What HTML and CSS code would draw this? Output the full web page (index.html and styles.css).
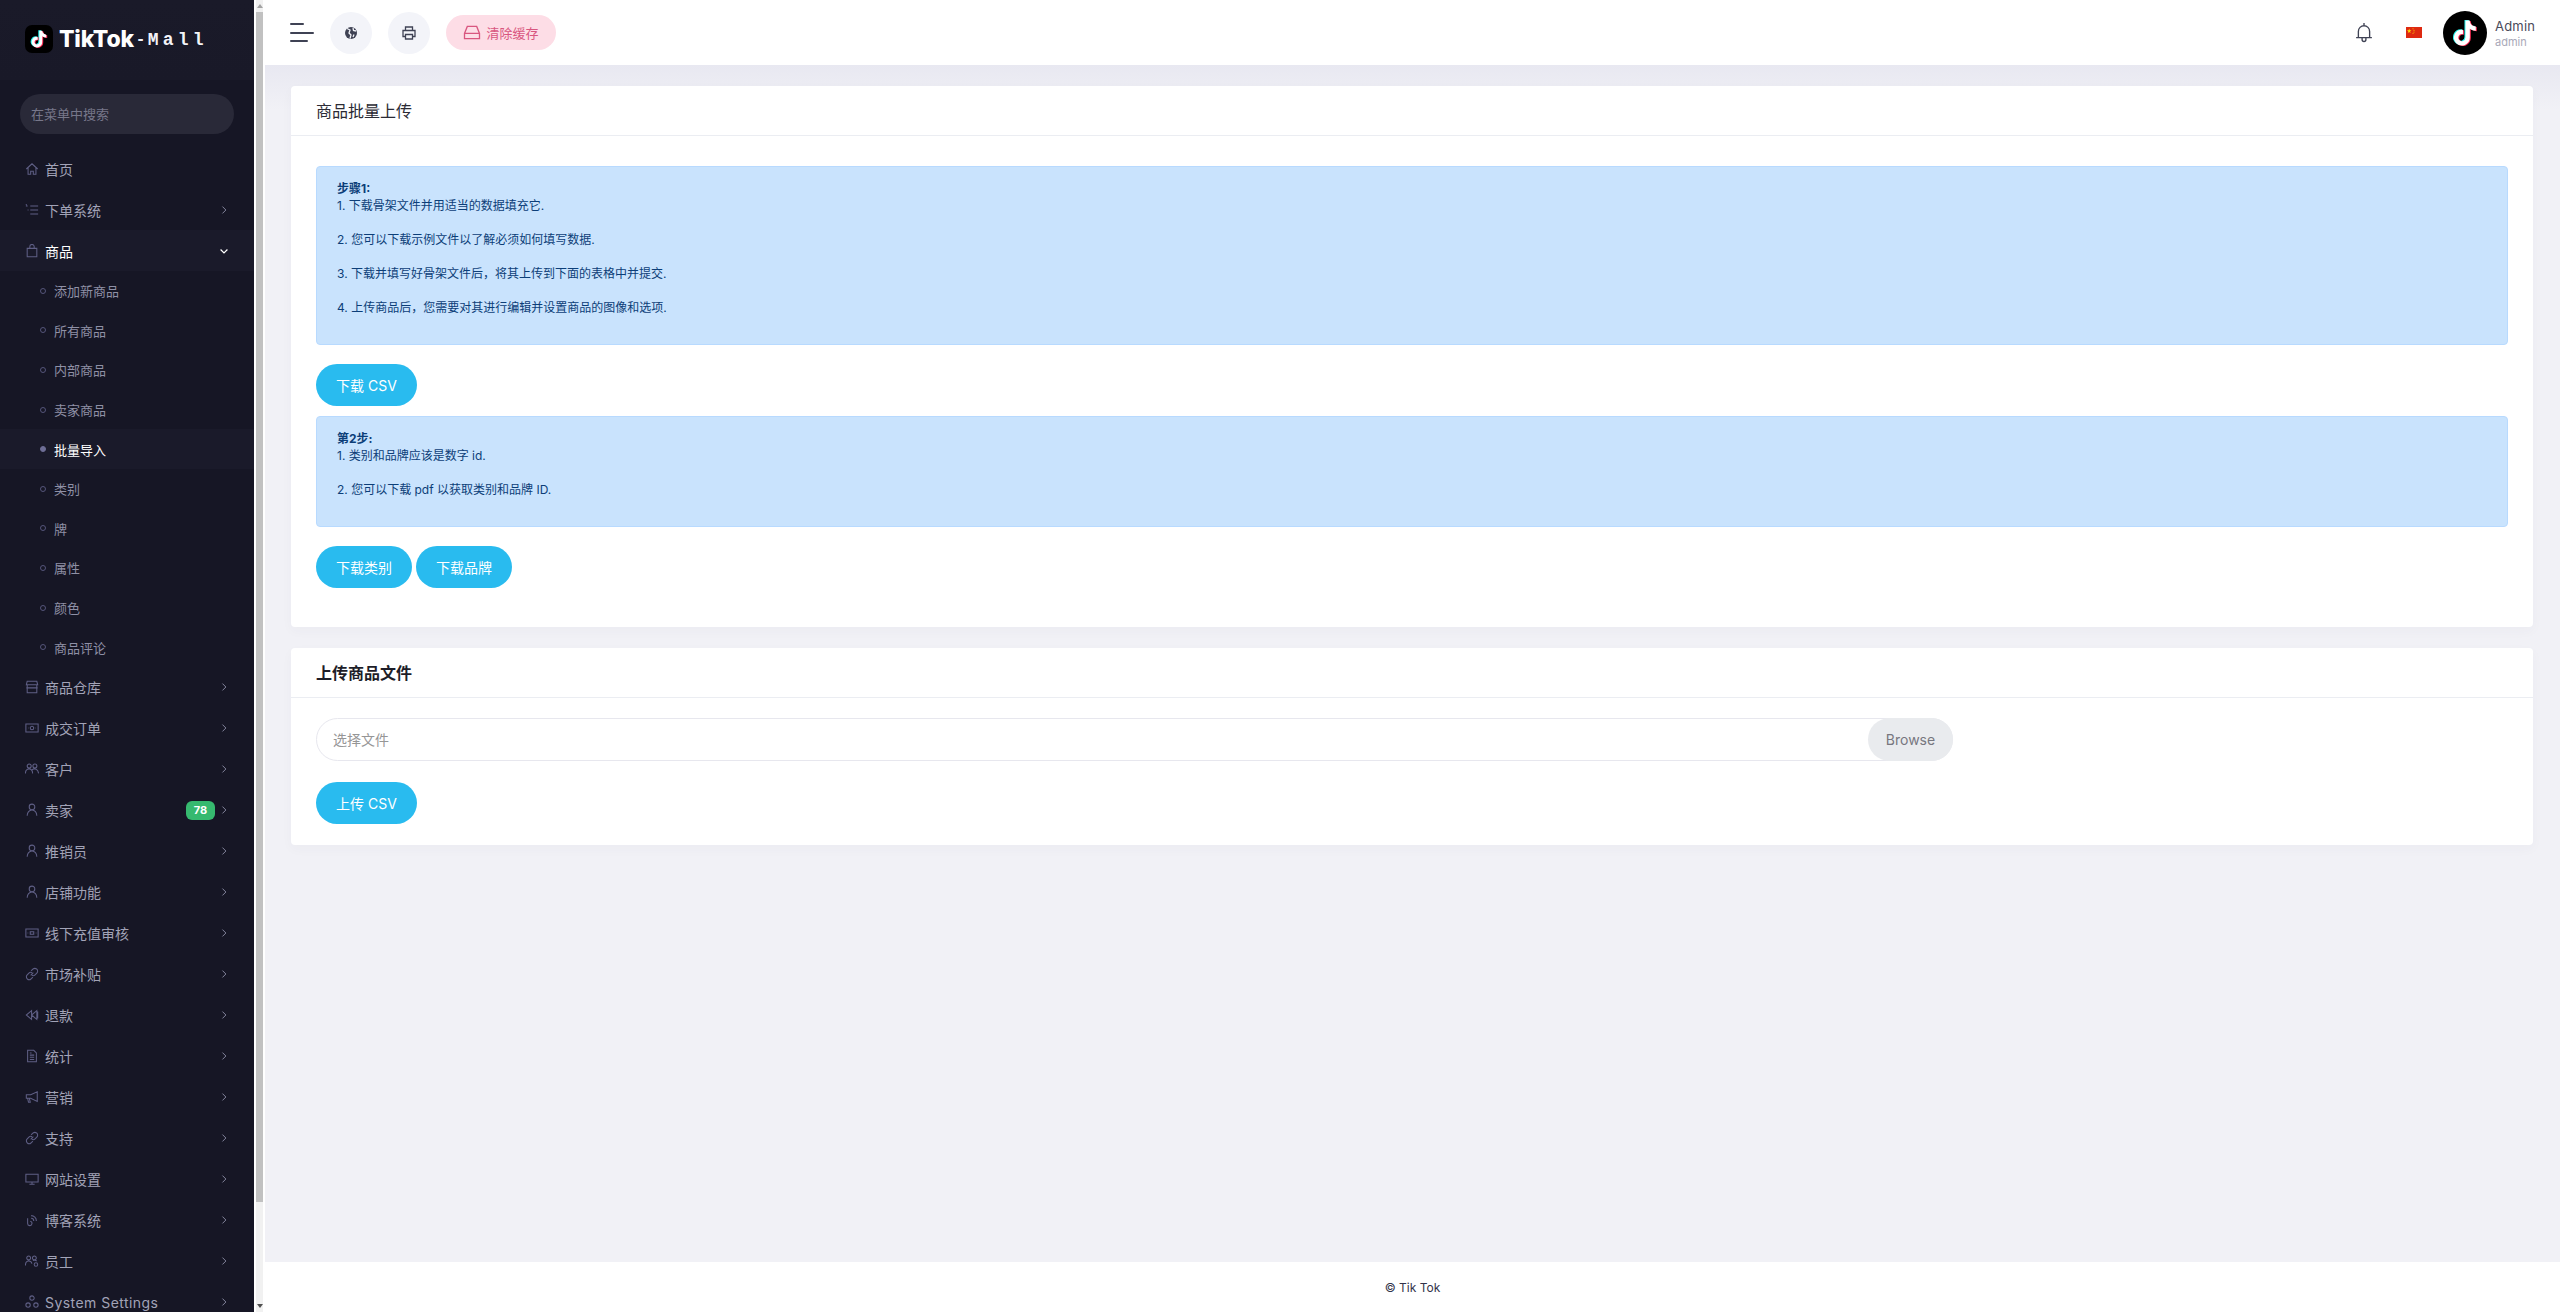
FILE: index.html
```html
<!DOCTYPE html>
<html lang="zh">
<head>
<meta charset="utf-8">
<title>商品批量上传</title>
<link rel="stylesheet" href="styles.css">
</head>
<body>
<svg class="defs" aria-hidden="true">
  <symbol id="note" viewBox="0 0 24 24"><path d="M19.59 6.69a4.83 4.83 0 0 1-3.77-4.25V2h-3.45v13.67a2.89 2.89 0 0 1-5.2 1.74 2.89 2.89 0 0 1 2.31-4.64 2.93 2.93 0 0 1 .88.13V9.4a6.84 6.84 0 0 0-1-.05A6.33 6.33 0 0 0 5 20.1a6.34 6.34 0 0 0 10.86-4.43v-7a8.16 8.16 0 0 0 4.77 1.52v-3.4a4.85 4.85 0 0 1-1-.1z"/></symbol>
  <symbol id="chev" viewBox="0 0 16 16"><path d="M5.500 2.500 11 8l-5.500 5.500"/></symbol>
  <symbol id="chevd" viewBox="0 0 16 16"><path d="M2.500 5.500 8 11l5.500-5.500"/></symbol>
  <symbol id="home" viewBox="0 0 16 16"><path d="M1.500 8 8 2l6.500 6M3.500 6.500V14h3v-3.500h3V14h3V6.500"/></symbol>
  <symbol id="list" viewBox="0 0 16 16"><path d="M6 3.500h9M6 8h9M6 12.500h9M1 3.500h2M3 8h1M1 1.500l1 1"/></symbol>
  <symbol id="bag" viewBox="0 0 16 16"><path d="M2.500 5h11v9.500h-11zM5.500 5V3a2.500 2.500 0 0 1 5 0v2"/></symbol>
  <symbol id="store" viewBox="0 0 16 16"><path d="M1.500 5.500 2.500 1.500h11l1 4zM2.500 5.500v9h11v-9M1.500 9h13"/></symbol>
  <symbol id="cash" viewBox="0 0 16 16"><path d="M1 3.500h14v9H1zM6 8a2 2 0 1 0 4 0 2 2 0 1 0-4 0M3.500 8h.5M12 8h.5"/></symbol>
  <symbol id="users" viewBox="0 0 16 16"><path d="M2.500 4.500a2.300 2.300 0 1 0 4.600 0 2.300 2.300 0 1 0-4.600 0M9 4.500a2.300 2.300 0 1 0 4.600 0 2.300 2.300 0 1 0-4.600 0M.5 13c0-3 1.800-5 4.200-5s4 2 4 5M8 9c1-1 3.600-1.500 5-.5s2.300 2.500 2.500 4.500"/></symbol>
  <symbol id="user" viewBox="0 0 16 16"><path d="M4.800 4.500a3.200 3.200 0 1 0 6.400 0 3.200 3.200 0 1 0-6.400 0M2.500 14.500c0-3.500 2.300-6.500 5.500-6.500s5.500 3 5.500 6.500"/></symbol>
  <symbol id="money" viewBox="0 0 16 16"><path d="M1 3.500h14v9H1zM6 6.500h4v3H6zM3 8h.7M12.300 8h.7"/></symbol>
  <symbol id="link" viewBox="0 0 16 16"><path d="M6.500 9.500l3-3M7 4.500l2-2a3 3 0 0 1 4.500 4.500l-2 2a3 3 0 0 1-3.500.5M9 11.500l-2 2A3 3 0 0 1 2.500 9l2-2A3 3 0 0 1 8 6.500"/></symbol>
  <symbol id="rewind" viewBox="0 0 16 16"><path d="M7.500 3 1.500 8l6 5zM13.500 3l-6 5 6 5zM14.500 4v8"/></symbol>
  <symbol id="doc" viewBox="0 0 16 16"><path d="M3 1.500h7l3 3v10H3zM5.500 7h5M5.500 9.500h5M5.500 12h5M5.500 4.500h2"/></symbol>
  <symbol id="horn" viewBox="0 0 16 16"><path d="M1.500 5.500h5L14 2v11L6.500 9.500h-5zM3 9.500l1 4.500h2l-1-4.500"/></symbol>
  <symbol id="screen" viewBox="0 0 16 16"><path d="M1 2.500h14v9H1zM8 11.500v2.500M5 14h6"/></symbol>
  <symbol id="rss" viewBox="0 0 16 16"><path d="M3 6v6a2.500 2.500 0 1 0 3-2.500M7 3a6 6 0 0 1 6 6M7 6a3 3 0 0 1 3 3"/></symbol>
  <symbol id="staff" viewBox="0 0 16 16"><path d="M2 4.500a2.200 2.200 0 1 0 4.400 0 2.200 2.200 0 1 0-4.400 0M8.500 4.500a2.200 2.200 0 1 0 4.400 0 2.200 2.200 0 1 0-4.400 0M.5 13c0-3 1.500-5 3.700-5s3.400 1.500 3.700 3M10.500 12a2 2 0 1 0 4 0 2 2 0 1 0-4 0M9 7.500c1-.5 3-.5 4.500.5"/></symbol>
  <symbol id="nodes" viewBox="0 0 16 16"><path d="M5.500 3.500a2.500 2.500 0 1 0 5 0 2.500 2.500 0 1 0-5 0M1 11.500a2.500 2.500 0 1 0 5 0 2.500 2.500 0 1 0-5 0M10 11.500a2.500 2.500 0 1 0 5 0 2.500 2.500 0 1 0-5 0"/></symbol>
</svg>

<div class="app">
  <aside class="sidebar">
    <div class="brand">
      <span class="brand-tile">
        <svg class="brand-note note-cyan"><use href="#note"/></svg>
        <svg class="brand-note note-red"><use href="#note"/></svg>
        <svg class="brand-note note-white"><use href="#note"/></svg>
      </span>
      <span class="brand-name">TikTok</span><span class="brand-dash">-</span><span class="brand-sub">Mall</span>
    </div>
    <div class="search"><span>在菜单中搜索</span></div>
    <nav class="nav">
      <a class="item"><svg class="ico"><use href="#home"/></svg><span class="label">首页</span></a>
      <a class="item"><svg class="ico"><use href="#list"/></svg><span class="label">下单系统</span><svg class="chev"><use href="#chev"/></svg></a>
      <a class="item open"><svg class="ico"><use href="#bag"/></svg><span class="label">商品</span><svg class="chev"><use href="#chevd"/></svg></a>
      <a class="sub"><i class="dot"></i>添加新商品</a>
      <a class="sub"><i class="dot"></i>所有商品</a>
      <a class="sub"><i class="dot"></i>内部商品</a>
      <a class="sub"><i class="dot"></i>卖家商品</a>
      <a class="sub current"><i class="dot"></i>批量导入</a>
      <a class="sub"><i class="dot"></i>类别</a>
      <a class="sub"><i class="dot"></i>牌</a>
      <a class="sub"><i class="dot"></i>属性</a>
      <a class="sub"><i class="dot"></i>颜色</a>
      <a class="sub"><i class="dot"></i>商品评论</a>
      <a class="item"><svg class="ico"><use href="#store"/></svg><span class="label">商品仓库</span><svg class="chev"><use href="#chev"/></svg></a>
      <a class="item"><svg class="ico"><use href="#cash"/></svg><span class="label">成交订单</span><svg class="chev"><use href="#chev"/></svg></a>
      <a class="item"><svg class="ico"><use href="#users"/></svg><span class="label">客户</span><svg class="chev"><use href="#chev"/></svg></a>
      <a class="item"><svg class="ico"><use href="#user"/></svg><span class="label">卖家</span><span class="badge">78</span><svg class="chev"><use href="#chev"/></svg></a>
      <a class="item"><svg class="ico"><use href="#user"/></svg><span class="label">推销员</span><svg class="chev"><use href="#chev"/></svg></a>
      <a class="item"><svg class="ico"><use href="#user"/></svg><span class="label">店铺功能</span><svg class="chev"><use href="#chev"/></svg></a>
      <a class="item"><svg class="ico"><use href="#money"/></svg><span class="label">线下充值审核</span><svg class="chev"><use href="#chev"/></svg></a>
      <a class="item"><svg class="ico"><use href="#link"/></svg><span class="label">市场补贴</span><svg class="chev"><use href="#chev"/></svg></a>
      <a class="item"><svg class="ico"><use href="#rewind"/></svg><span class="label">退款</span><svg class="chev"><use href="#chev"/></svg></a>
      <a class="item"><svg class="ico"><use href="#doc"/></svg><span class="label">统计</span><svg class="chev"><use href="#chev"/></svg></a>
      <a class="item"><svg class="ico"><use href="#horn"/></svg><span class="label">营销</span><svg class="chev"><use href="#chev"/></svg></a>
      <a class="item"><svg class="ico"><use href="#link"/></svg><span class="label">支持</span><svg class="chev"><use href="#chev"/></svg></a>
      <a class="item"><svg class="ico"><use href="#screen"/></svg><span class="label">网站设置</span><svg class="chev"><use href="#chev"/></svg></a>
      <a class="item"><svg class="ico"><use href="#rss"/></svg><span class="label">博客系统</span><svg class="chev"><use href="#chev"/></svg></a>
      <a class="item"><svg class="ico"><use href="#staff"/></svg><span class="label">员工</span><svg class="chev"><use href="#chev"/></svg></a>
      <a class="item"><svg class="ico"><use href="#nodes"/></svg><span class="label latin">System Settings</span><svg class="chev"><use href="#chev"/></svg></a>
    </nav>
  </aside>

  <div class="scrollbar">
    <i class="sb-up"></i>
    <div class="sb-track"><div class="sb-thumb"></div></div>
    <i class="sb-down"></i>
  </div>

  <div class="main">
    <header class="topbar">
      <div class="burger"><i class="b1"></i><i class="b2"></i><i class="b3"></i></div>
      <span class="round first">
        <svg class="round-ico" viewBox="0 0 16 16"><circle cx="8" cy="8" r="6" fill="#3f4254"/><path d="M4 3.500 7 5 6 8l2 2-1 3.500M10 3l.5 2.500L13 6M11 9.500l-1 2.500" fill="none" stroke="#f3f4f9" stroke-width="1.300"/></svg>
      </span>
      <span class="round">
        <svg class="round-ico" viewBox="0 0 16 16"><path d="M4.500 5.500V2h7v3.500M4.500 11.500H2v-6h12v6h-2.500M4.500 9.500h7V14h-7z" fill="none" stroke="#3f4254" stroke-width="1.300"/></svg>
      </span>
      <span class="clear">
        <svg class="clear-ico" viewBox="0 0 18 16"><path d="M4 1.500h10l3 7.500v5.500H1V9zM1 9h16" fill="none" stroke="#d9567f" stroke-width="1.400"/></svg>
        清除缓存
      </span>
      <div class="top-right">
        <svg class="bell" viewBox="0 0 16 18"><path d="M8 .5v2M3 13.500V8a5 5 0 0 1 10 0v5.500M1 13.500h14M6.300 14v1.300a1.700 1.700 0 0 0 3.400 0V14" fill="none" stroke="#3f4254" stroke-width="1.200"/></svg>
        <svg class="flag" viewBox="0 0 16 11"><rect width="16" height="11" fill="#de2910"/><path d="m3.200 1.600.6 1.700h1.700l-1.400 1 .5 1.700-1.400-1-1.400 1 .5-1.700-1.400-1h1.700z" fill="#ffde00"/><circle cx="7" cy="1.800" r=".5" fill="#ffde00"/><circle cx="8" cy="3.200" r=".5" fill="#ffde00"/><circle cx="8" cy="5" r=".5" fill="#ffde00"/><circle cx="7" cy="6.300" r=".5" fill="#ffde00"/></svg>
        <span class="avatar">
          <svg class="av-note note-cyan"><use href="#note"/></svg>
          <svg class="av-note note-red"><use href="#note"/></svg>
          <svg class="av-note note-white"><use href="#note"/></svg>
        </span>
        <div class="who"><span class="who-name">Admin</span><span class="who-role">admin</span></div>
      </div>
    </header>

    <main class="content">
      <section class="card">
        <div class="card-head"><h5 class="title">商品批量上传</h5></div>
        <div class="card-body first-body">
          <div class="alert">
            <strong>步骤1:</strong><br>
            1. 下载骨架文件并用适当的数据填充它.<br><br>
            2. 您可以下载示例文件以了解必须如何填写数据.<br><br>
            3. 下载并填写好骨架文件后，将其上传到下面的表格中并提交.<br><br>
            4. 上传商品后，您需要对其进行编辑并设置商品的图像和选项.<br><br>
          </div>
          <div class="btn-row"><a class="btn">下载 CSV</a></div>
          <div class="alert">
            <strong>第2步:</strong><br>
            1. 类别和品牌应该是数字 id.<br><br>
            2. 您可以下载 pdf 以获取类别和品牌 ID.<br><br>
          </div>
          <div class="btn-row"><a class="btn">下载类别</a><a class="btn">下载品牌</a></div>
        </div>
      </section>

      <section class="card">
        <div class="card-head"><h5 class="title strong">上传商品文件</h5></div>
        <div class="card-body second-body">
          <div class="file"><span class="file-text">选择文件</span><span class="browse">Browse</span></div>
          <a class="btn">上传 CSV</a>
        </div>
      </section>
    </main>

    <footer class="footer">© Tik Tok</footer>
  </div>
</div>
</body>
</html>
```
FILE: styles.css
```css
* { box-sizing: border-box; }
html, body { margin: 0; height: 100%; overflow: hidden; }
body {
  font-family: Inter, "Noto Sans CJK SC", sans-serif;
  font-size: 13px;
  color: #3f4254;
  background: #f1f1f6;
}
.defs { width: 0; height: 0; position: absolute; }
.app { display: flex; height: 1312px; }

/* sidebar */
.sidebar { width: 254px; flex: none; background: #161625; overflow: hidden; }
.brand {
  height: 80px;
  padding: 25px 0 0 25px;
  display: flex;
  align-items: flex-start;
  background: linear-gradient(#1a1a29, #191928);
}
.brand-tile {
  position: relative;
  width: 28px;
  height: 28px;
  background: #000;
  border-radius: 7px;
  margin-right: 6px;
  flex: none;
}
.brand-note { position: absolute; width: 20px; height: 20px; left: 4px; top: 4px; }
.note-cyan { fill: #25f4ee; transform: translate(-1px, -.5px); }
.note-red { fill: #fe2c55; transform: translate(1px, .5px); }
.note-white { fill: #fff; }
.brand-name { font-weight: 800; font-size: 23px; line-height: 29px; color: #fff; letter-spacing: -.2px; }
.brand-dash {
  font-family: "Liberation Mono", monospace;
  font-weight: 700;
  font-size: 16px;
  line-height: 30px;
  color: #f3f3f8;
  margin-left: 2px;
  width: 12px;
  flex: none;
}
.brand-sub {
  font-family: "Liberation Mono", monospace;
  font-weight: 700;
  font-size: 18px;
  line-height: 30px;
  color: #f3f3f8;
  letter-spacing: 4.200px;
}
.search {
  margin: 14px 20px 0;
  height: 40px;
  width: 214px;
  border-radius: 20px;
  background: #292938;
  padding: 0 11px 2px;
  display: flex;
  align-items: center;
  color: #77778a;
  font-size: 13px;
}
.nav { margin-top: 14px; display: flex; flex-direction: column; }
.item {
  height: 41px;
  flex: none;
  display: flex;
  align-items: center;
  padding: 0 25px 0 25px;
  color: #a2a3b7;
  font-size: 14px;
}
.item.open { color: #fff; background: #1a1a2a; }
.ico {
  width: 14px;
  height: 14px;
  margin-right: 6px;
  flex: none;
  fill: none;
  stroke: #5f5f85;
  stroke-width: 1.200;
}
.label { flex: 1; white-space: nowrap; }
.latin { letter-spacing: .45px; }
.chev {
  width: 10px;
  height: 10px;
  flex: none;
  fill: none;
  stroke: #8a8ba3;
  stroke-width: 1.500;
}
.open .chev { stroke: #fff; stroke-width: 2; }
.badge {
  width: 29px;
  height: 19px;
  margin-right: 4px;
  border-radius: 6px;
  background: #36b96f;
  color: #fff;
  font-size: 11px;
  font-weight: 700;
  display: flex;
  align-items: center;
  justify-content: center;
}
.sub {
  height: 39.600px;
  flex: none;
  display: flex;
  align-items: center;
  padding-left: 40px;
  color: #8f90a6;
  font-size: 13px;
}
.dot {
  width: 6px;
  height: 6px;
  border: 1px solid #55557a;
  border-radius: 50%;
  margin-right: 8px;
  flex: none;
}
.current { color: #fff; background: #1a1a2a; }
.current .dot { background: #6e6e96; border-color: #6e6e96; }

/* window scrollbar */
.scrollbar {
  width: 11px;
  flex: none;
  background: #fff;
  padding: 0 2px;
  display: flex;
  flex-direction: column;
}
.sb-track { flex: 1; background: #f1f1f1; }
.sb-thumb { height: 1190px; background: #c1c1c1; }
.sb-up, .sb-down {
  height: 12px;
  flex: none;
  background: #f1f1f1;
  display: flex;
  align-items: center;
  justify-content: center;
}
.sb-up::before, .sb-down::before {
  content: "";
  border-left: 3.500px solid transparent;
  border-right: 3.500px solid transparent;
}
.sb-up::before { border-bottom: 4px solid #a3a3a3; }
.sb-down::before { border-top: 4px solid #505050; }

/* main column */
.main { flex: 1; min-width: 0; display: flex; flex-direction: column; }
.topbar {
  height: 65px;
  flex: none;
  background: #fff;
  display: flex;
  align-items: center;
  padding: 0 0 0 25px;
}
.burger { width: 24px; margin-right: 16px; display: flex; flex-direction: column; gap: 6.500px; }
.burger i { display: block; height: 2px; background: #3f4254; border-radius: 1px; }
.b1 { width: 14px; }
.b2 { width: 24px; }
.b3 { width: 18px; }
.round {
  width: 42px;
  height: 42px;
  border-radius: 50%;
  background: #f3f4f9;
  display: flex;
  align-items: center;
  justify-content: center;
  margin-right: 16px;
  flex: none;
}
.round-ico { width: 16px; height: 16px; }
.clear {
  width: 110px;
  height: 35px;
  border-radius: 18px;
  background: #fddde6;
  color: #d9567f;
  font-size: 13px;
  display: flex;
  align-items: center;
  justify-content: center;
  gap: 5px;
}
.clear-ico { width: 18px; height: 15px; }
.top-right { margin-left: auto; display: flex; align-items: center; padding-right: 21px; }
.bell { width: 18px; height: 21px; margin-right: 33px; }
.flag { width: 16px; height: 11px; margin-right: 21px; }
.avatar {
  position: relative;
  width: 44px;
  height: 44px;
  border-radius: 50%;
  background: #000;
  margin-right: 8px;
  flex: none;
}
.av-note { position: absolute; width: 30px; height: 30px; left: 7px; top: 7px; }
.who { display: flex; flex-direction: column; width: 44px; }
.who-name { font-size: 13px; line-height: 18px; color: #4a4a5a; letter-spacing: .2px; }
.who-role { font-size: 11px; line-height: 14px; color: #a9a9b8; }

.content {
  flex: 1;
  padding: 21px 27px 0 26px;
  background: linear-gradient(#e8e8f1, #f1f1f6 45px);
}
.card {
  background: #fff;
  border-radius: 4px;
  margin-bottom: 21px;
  box-shadow: 0 4px 12px rgba(70, 70, 110, .03);
}
.card-head { height: 50px; border-bottom: 1px solid #ebedf2; padding: 0 25px 2px; display: flex; align-items: center; }
.title { margin: 0; font-size: 16px; font-weight: 400; color: #2b2b35; }
.title.strong { font-weight: 700; color: #1d1d28; }
.card-body { padding: 0 25px; }
.first-body { padding-top: 30px; padding-bottom: 39px; }
.second-body { padding-top: 20px; padding-bottom: 21px; }
.alert {
  background: #c9e3fd;
  border: 1px solid #b8daff;
  border-radius: 4px;
  color: #0c3e78;
  font-size: 12px;
  line-height: 17px;
  padding: 13px 20px 11px;
  margin-bottom: 19px;
}
.btn-row { display: flex; gap: 4px; margin-bottom: 10px; }
.first-body .btn-row:last-child { margin-bottom: 0; }
.btn {
  display: inline-flex;
  align-items: center;
  height: 42px;
  padding: 0 20px 1px;
  border-radius: 21px;
  background: #29bbef;
  color: #fff;
  font-size: 14px;
}
.file {
  width: 1637px;
  height: 43px;
  border: 1px solid #e7e7ee;
  border-radius: 22px;
  margin-bottom: 21px;
  display: flex;
  align-items: center;
  justify-content: space-between;
}
.file-text { padding: 0 0 1px 16px; font-size: 14px; color: #969696; }
.browse {
  width: 85px;
  height: 43px;
  margin: 0 -1px 0 0;
  border-radius: 22px;
  background: #e9ebee;
  color: #77777f;
  font-size: 14px;
  display: flex;
  align-items: center;
  justify-content: center;
}
.footer {
  height: 50px;
  flex: none;
  background: #fff;
  display: flex;
  align-items: center;
  justify-content: center;
  font-size: 12px;
  color: #33334a;
}
```
